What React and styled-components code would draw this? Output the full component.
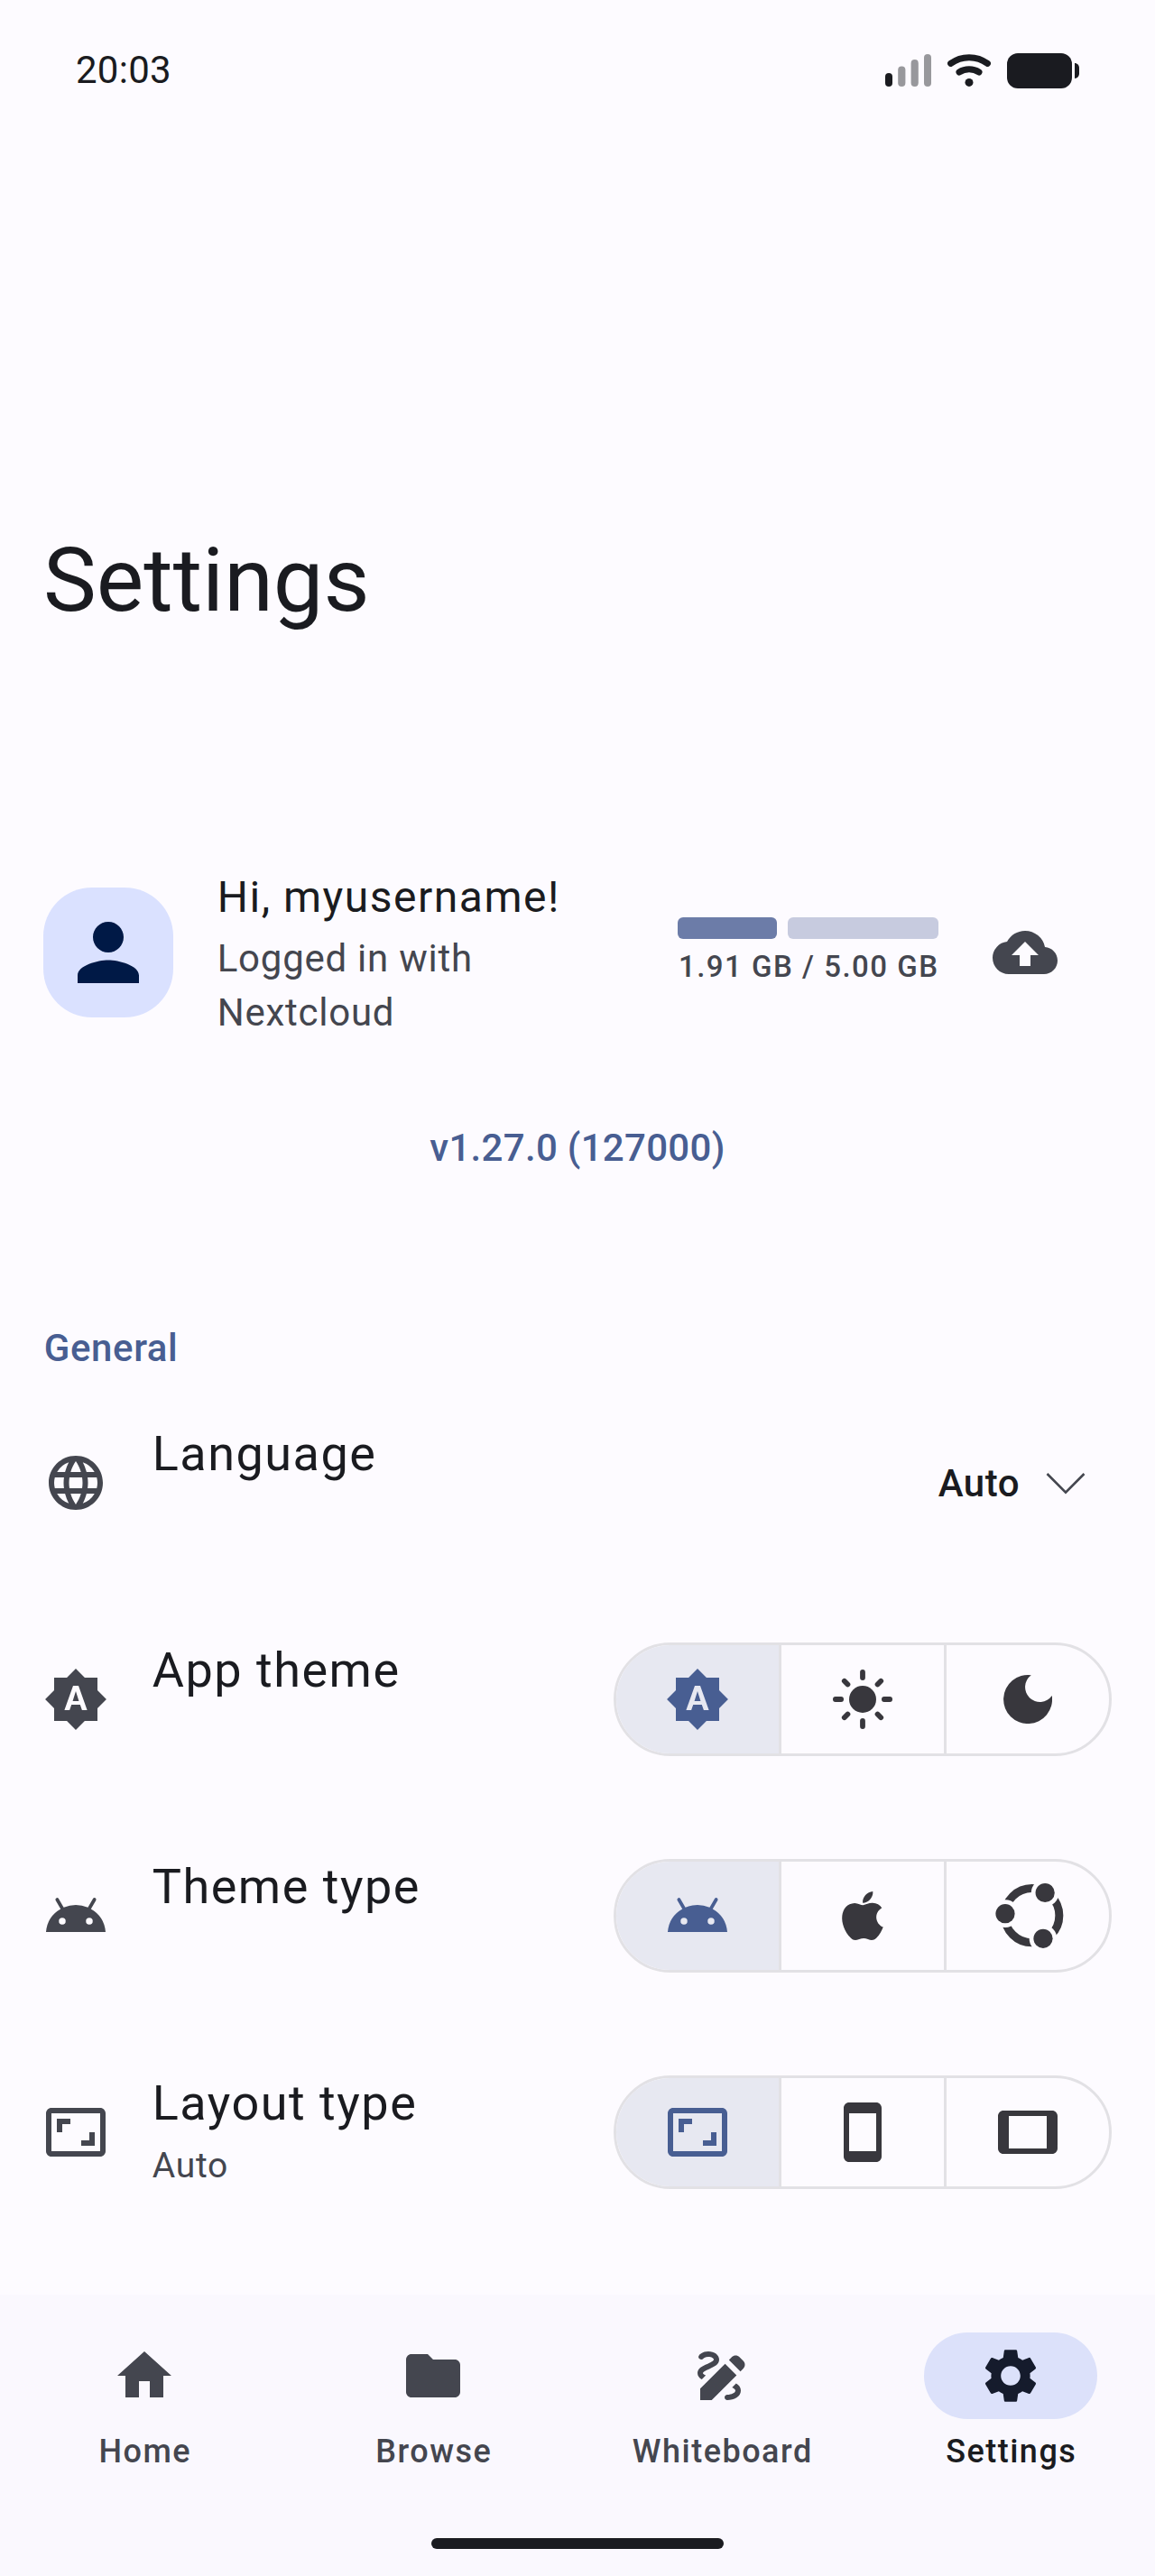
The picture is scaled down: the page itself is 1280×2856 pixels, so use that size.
import React from "react";
import styled, { createGlobalStyle } from "styled-components";
import {
  MdPerson,
  MdCloudUpload,
  MdLanguage,
  MdBrightnessAuto,
  MdAndroid,
  MdAspectRatio,
  MdSmartphone,
  MdTablet,
  MdHome,
  MdFolder,
  MdDraw,
  MdSettings,
} from "react-icons/md";

const color = {
  background: "#fdfbff",
  text: "#1a1b20",
  muted: "#44464f",
  primary: "#485e92",
  icon: "#38373d",
  container: "#dae1ff",
  onContainer: "#001946",
  outline: "#e2e1e5",
  selected: "#e7e8f1",
  nav: "#faf8fe",
  indicator: "#dce1fa",
};

const GlobalStyle = createGlobalStyle`
  body {
    margin: 0;
    background: ${color.background};
    font-family: Roboto, "Liberation Sans", sans-serif;
    color: ${color.text};
  }
  svg {
    display: block;
    flex: none;
  }
`;

const Screen = styled.div`
  display: flex;
  flex-direction: column;
  width: 1280px;
  height: 2856px;
  overflow: hidden;
  background: ${color.background};
`;

const StatusBar = styled.header`
  display: flex;
  align-items: center;
  justify-content: space-between;
  box-sizing: border-box;
  height: 156px;
  padding: 0 84px;
`;

const Clock = styled.span`
  font-size: 42px;
  line-height: 60px;
  letter-spacing: 0.25px;
`;

const StatusIcons = styled.div`
  display: flex;
  align-items: center;
  gap: 18px;
`;

const Title = styled.h1`
  margin: 427px 48px 0;
  font-size: 99px;
  font-weight: 400;
  line-height: 120px;
`;

const Profile = styled.section`
  display: flex;
  align-items: center;
  box-sizing: border-box;
  height: 240px;
  margin-top: 233px;
  padding: 0 108px 0 48px;
`;

const Avatar = styled.div`
  display: grid;
  place-items: center;
  width: 144px;
  height: 144px;
  margin-right: 48px;
  border-radius: 54px;
  background: ${color.container};
  color: ${color.onContainer};
`;

const Identity = styled.div`
  display: flex;
  flex-direction: column;
  flex: 1;
  gap: 2px;
  padding-left: 0.75px;
`;

const Greeting = styled.div`
  font-size: 48px;
  line-height: 72px;
  letter-spacing: 1.5px;
`;

const Account = styled.div`
  width: 385px;
  font-size: 42px;
  line-height: 60px;
  letter-spacing: 0.75px;
  color: ${color.muted};
`;

const Storage = styled.div`
  display: flex;
  flex-direction: column;
  align-items: center;
  width: 289px;
  margin-right: 60px;
`;

const StorageMeter = styled.div`
  display: flex;
  gap: 12px;
  width: 100%;
  height: 24px;
`;

const MeterPart = styled.div`
  flex: ${(p) => p.$share};
  border-radius: 6px;
  background: ${(p) => (p.$used ? "#6c7ca8" : "#c7cbdf")};
`;

const StorageText = styled.div`
  margin-top: 7px;
  padding-left: 1.5px;
  font-size: 33px;
  font-weight: 500;
  line-height: 47px;
  letter-spacing: 1.5px;
  white-space: nowrap;
  color: ${color.muted};
`;

const SyncIcon = styled(MdCloudUpload)`
  color: ${color.muted};
`;

const Version = styled.div`
  margin-top: 67px;
  font-size: 42px;
  font-weight: 500;
  line-height: 60px;
  letter-spacing: 0.3px;
  text-align: center;
  color: ${color.primary};
`;

const SectionTitle = styled.h2`
  margin: 162px 48px -1px 48.75px;
  font-size: 42px;
  font-weight: 500;
  line-height: 60px;
  letter-spacing: 0.6px;
  color: ${color.primary};
`;

const Row = styled.div`
  display: flex;
  align-items: center;
  box-sizing: border-box;
  height: 240px;
  padding: 0 48px;
`;

const RowIcon = styled.div`
  margin-right: 48px;
  color: ${color.muted};
`;

const RowText = styled.div`
  flex: 1;
  box-sizing: border-box;
  height: 145px;
  padding-left: 0.75px;
`;

const RowTitle = styled.div`
  font-size: 54px;
  line-height: 80px;
  letter-spacing: 1.5px;
`;

const RowSubtitle = styled.div`
  font-size: 39px;
  line-height: 58px;
  letter-spacing: 0.75px;
  color: ${color.muted};
`;

const Dropdown = styled.div`
  display: flex;
  align-items: center;
  gap: 29px;
  padding: 2px 29px 0 0;
  font-size: 42px;
  font-weight: 500;
  line-height: 60px;
  letter-spacing: 0.5px;
`;

const Segments = styled.div`
  display: flex;
  box-sizing: border-box;
  width: 552px;
  height: 126px;
  border: 3px solid ${color.outline};
  border-radius: 63px;
  overflow: hidden;
`;

const Segment = styled.div`
  display: grid;
  place-items: center;
  flex: 0 0 180px;
  color: ${(p) => (p.$selected ? color.primary : color.icon)};
  background: ${(p) => (p.$selected ? color.selected : "transparent")};

  & + & {
    border-left: 3px solid ${color.outline};
  }
`;

const NavArea = styled.footer`
  display: flex;
  flex-direction: column;
  align-items: center;
  box-sizing: border-box;
  height: 312px;
  margin-top: auto;
  padding: 42px 0 30px;
  background: ${color.nav};
`;

const Nav = styled.nav`
  display: flex;
  width: 100%;
`;

const NavItem = styled.div`
  display: flex;
  flex: 1;
  flex-direction: column;
  align-items: center;
  gap: 9px;
  color: ${(p) => (p.$active ? color.text : color.muted)};
`;

const NavIndicator = styled.div`
  display: grid;
  place-items: center;
  width: 192px;
  height: 96px;
  border-radius: 48px;
  color: ${(p) => (p.$active ? "#151b2c" : color.muted)};
  background: ${(p) => (p.$active ? color.indicator : "transparent")};
`;

const NavLabel = styled.span`
  padding-left: 1.5px;
  font-size: 36px;
  font-weight: 500;
  line-height: 54px;
  letter-spacing: 1.5px;
`;

const HomeBar = styled.div`
  width: 324px;
  height: 12px;
  margin-top: auto;
  border-radius: 6px;
  background: ${color.text};
`;

function SignalIcon() {
  return (
    <svg width="51" height="36" viewBox="0 0 51 36" fill={color.text}>
      <rect x="0" y="21" width="8" height="15" rx="4" />
      <g opacity="0.44">
        <rect x="14.2" y="13.5" width="8.2" height="22.5" rx="4" />
        <rect x="28.6" y="6" width="8.2" height="30" rx="4" />
        <rect x="43" y="0" width="8" height="36" rx="4" />
      </g>
    </svg>
  );
}

function WifiIcon() {
  return (
    <svg width="48" height="36" viewBox="0 0 48 36" fill="none" stroke={color.text} strokeWidth="7" strokeLinecap="round">
      <path d="M3.6 10.4C15.5 1.4 32.5 1.4 44.4 10.4" />
      <path d="M13 20C19.5 15.8 28.5 15.8 35 20" />
      <circle cx="24" cy="31.4" r="4.5" fill={color.text} stroke="none" />
    </svg>
  );
}

function BatteryIcon() {
  return (
    <svg width="80" height="39" viewBox="0 0 80 39" fill={color.text}>
      <rect width="72" height="39" rx="12" />
      <path d="M75 11c3 0 5 2.4 5 5.4v6.2c0 3-2 5.4-5 5.4z" />
    </svg>
  );
}

function ChevronIcon() {
  return (
    <svg width="44" height="26" viewBox="0 0 44 26" fill="none" stroke={color.muted} strokeWidth="2.6">
      <path d="M1.5 2L22 22.6L42.5 2" />
    </svg>
  );
}

const RAY_ANGLES = [0, 45, 90, 135, 180, 225, 270, 315];

function SunIcon() {
  return (
    <svg width="72" height="72" viewBox="-36 -36 72 72" fill="currentColor">
      <circle r="15" />
      {RAY_ANGLES.map((angle) => (
        <line
          key={angle}
          y1={angle % 90 ? -28.6 : -30.1}
          y2={angle % 90 ? -23.4 : -23.9}
          stroke="currentColor"
          strokeWidth="5.8"
          strokeLinecap="round"
          transform={`rotate(${angle})`}
        />
      ))}
    </svg>
  );
}

function MoonIcon() {
  return (
    <svg width="54" height="54" viewBox="0 0 54 54" fill="currentColor">
      <path d="M30.8 0.3A16.4 16.4 0 1 0 53.8 23.1A27 27 0 1 1 30.8 0.3Z" />
    </svg>
  );
}

function AppleIcon() {
  return (
    <svg width="72" height="72" viewBox="0 0 24 24" fill="currentColor">
      <path d="M17.05 20.28c-.98.95-2.05.88-3.08.38-1.09-.5-2.08-.48-3.24 0-1.44.62-2.2.44-3.06-.38C2.79 15.25 3.51 7.59 9.05 7.31c1.35.07 2.29.74 3.08.8 1.18-.24 2.31-.93 3.57-.84 1.51.12 2.65.72 3.4 1.8-3.12 1.87-2.38 5.98.48 7.13-.57 1.5-1.31 2.99-2.54 4.09zM12.03 7.25c-.15-2.23 1.66-4.07 3.74-4.25.29 2.58-2.34 4.5-3.74 4.25z" />
    </svg>
  );
}

function UbuntuIcon() {
  return (
    <svg width="84" height="84" viewBox="531 36 252 252" fill="currentColor">
      <mask id="ringGaps" maskUnits="userSpaceOnUse" x="531" y="36" width="252" height="252">
        <rect x="531" y="36" width="252" height="252" fill="#fff" />
        <circle cx="714.5" cy="85.5" r="46" fill="#000" />
        <circle cx="582" cy="155" r="46" fill="#000" />
        <circle cx="708" cy="238" r="46" fill="#000" />
      </mask>
      <circle cx="671" cy="161" r="90.5" fill="none" stroke="currentColor" strokeWidth="27" mask="url(#ringGaps)" />
      <circle cx="714.5" cy="85.5" r="31.8" />
      <circle cx="582" cy="155" r="31.8" />
      <circle cx="708" cy="238" r="31.8" />
    </svg>
  );
}

const settings = [
  {
    title: "App theme",
    icon: <MdBrightnessAuto size={72} />,
    options: [<MdBrightnessAuto size={72} />, <SunIcon />, <MoonIcon />],
  },
  {
    title: "Theme type",
    icon: <MdAndroid size={72} />,
    options: [<MdAndroid size={72} />, <AppleIcon />, <UbuntuIcon />],
  },
  {
    title: "Layout type",
    subtitle: "Auto",
    icon: <MdAspectRatio size={72} />,
    options: [<MdAspectRatio size={72} />, <MdSmartphone size={72} />, <MdTablet size={72} />],
  },
];

const destinations = [
  { label: "Home", Icon: MdHome },
  { label: "Browse", Icon: MdFolder },
  { label: "Whiteboard", Icon: MdDraw },
  { label: "Settings", Icon: MdSettings, active: true },
];

function SettingRow({ icon, title, subtitle, children }) {
  return (
    <Row>
      <RowIcon>{icon}</RowIcon>
      <RowText>
        <RowTitle>{title}</RowTitle>
        {subtitle && <RowSubtitle>{subtitle}</RowSubtitle>}
      </RowText>
      {children}
    </Row>
  );
}

export default function App() {
  return (
    <Screen>
      <GlobalStyle />
      <StatusBar>
        <Clock>20:03</Clock>
        <StatusIcons>
          <SignalIcon />
          <WifiIcon />
          <BatteryIcon />
        </StatusIcons>
      </StatusBar>

      <Title>Settings</Title>

      <Profile>
        <Avatar>
          <MdPerson size={102} />
        </Avatar>
        <Identity>
          <Greeting>Hi, myusername!</Greeting>
          <Account>Logged in with Nextcloud</Account>
        </Identity>
        <Storage>
          <StorageMeter>
            <MeterPart $used $share={1.99} />
            <MeterPart $share={3.0} />
          </StorageMeter>
          <StorageText>1.91 GB / 5.00 GB</StorageText>
        </Storage>
        <SyncIcon size={72} />
      </Profile>

      <Version>v1.27.0 (127000)</Version>

      <SectionTitle>General</SectionTitle>
      <SettingRow icon={<MdLanguage size={72} />} title="Language">
        <Dropdown>
          Auto
          <ChevronIcon />
        </Dropdown>
      </SettingRow>
      {settings.map(({ title, subtitle, icon, options }) => (
        <SettingRow key={title} icon={icon} title={title} subtitle={subtitle}>
          <Segments>
            {options.map((option, index) => (
              <Segment key={index} $selected={index === 0}>
                {option}
              </Segment>
            ))}
          </Segments>
        </SettingRow>
      ))}

      <NavArea>
        <Nav>
          {destinations.map(({ label, Icon, active }) => (
            <NavItem key={label} $active={active}>
              <NavIndicator $active={active}>
                <Icon size={72} />
              </NavIndicator>
              <NavLabel>{label}</NavLabel>
            </NavItem>
          ))}
        </Nav>
        <HomeBar />
      </NavArea>
    </Screen>
  );
}
